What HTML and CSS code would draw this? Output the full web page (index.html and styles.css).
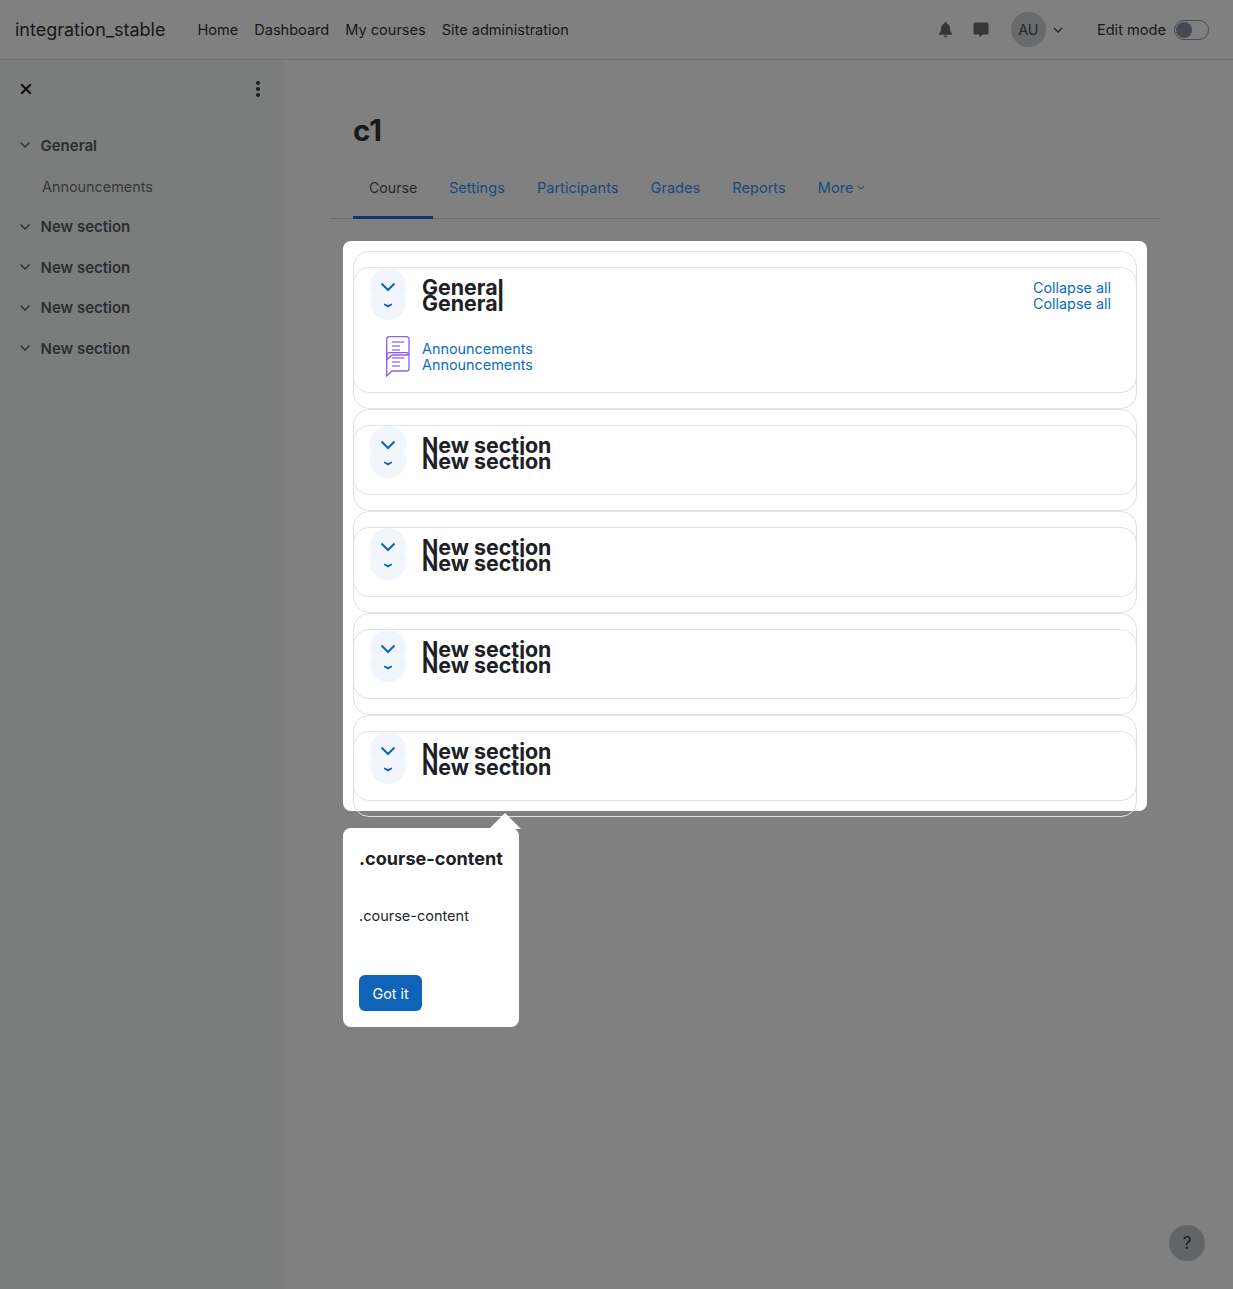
FILE: index.html
```html
<!DOCTYPE html>
<html lang="en">
<head>
  <meta charset="UTF-8">
  <title>c1</title>
  <link rel="stylesheet" href="styles.css">
</head>
<body>

<header class="navbar">
  <span class="brand">integration_stable</span>
  <nav class="primary-nav">
    <a>Home</a>
    <a>Dashboard</a>
    <a>My courses</a>
    <a>Site administration</a>
  </nav>
  <div class="nav-right">
    <svg class="nav-icon bell" viewBox="0 0 14 16"><path d="M7 0a1.200 1.200 0 0 0-1.200 1.200v.5C3.700 2.200 2.500 4 2.500 6.200c0 3.300-.9 4.300-1.900 5.400-.4.400-.1 1.100.5 1.100h11.800c.6 0 .9-.7.5-1.100-1-1.100-1.900-2.100-1.900-5.400 0-2.200-1.200-4-3.300-4.500v-.5A1.200 1.200 0 0 0 7 0zM5.200 13.600a1.800 1.800 0 0 0 3.600 0z"/></svg>
    <svg class="nav-icon chat" viewBox="0 0 16 16"><path d="M2 .5h12A1.500 1.500 0 0 1 15.500 2v9a1.500 1.500 0 0 1-1.500 1.500H9.500l-3 3v-3H2A1.500 1.500 0 0 1 .5 11V2A1.500 1.500 0 0 1 2 .5z"/></svg>
    <span class="avatar">AU</span>
    <svg class="chev avatar-chev" viewBox="0 0 10 6"><path d="M1 1l4 4 4-4"/></svg>
    <span class="edit-label">Edit mode</span>
    <span class="switch"><span class="knob"></span></span>
  </div>
</header>

<div class="page">
  <aside class="sidebar">
    <div class="sidebar-top">
      <svg class="close-icon" viewBox="0 0 10 10"><path d="M1 1l8 8M9 1l-8 8"/></svg>
      <span class="dots"><i></i><i></i><i></i></span>
    </div>
    <ul class="index">
      <li class="index-section"><svg class="chev" viewBox="0 0 10 6"><path d="M.5.500 5 5 9.500.5"/></svg>General</li>
      <li class="index-item">Announcements</li>
      <li class="index-section"><svg class="chev" viewBox="0 0 10 6"><path d="M.5.500 5 5 9.500.5"/></svg>New section</li>
      <li class="index-section"><svg class="chev" viewBox="0 0 10 6"><path d="M.5.500 5 5 9.500.5"/></svg>New section</li>
      <li class="index-section"><svg class="chev" viewBox="0 0 10 6"><path d="M.5.500 5 5 9.500.5"/></svg>New section</li>
      <li class="index-section"><svg class="chev" viewBox="0 0 10 6"><path d="M.5.500 5 5 9.500.5"/></svg>New section</li>
    </ul>
  </aside>

  <main class="main">
    <h1 class="course-title">c1</h1>
    <div class="tabs">
      <a class="tab active">Course</a>
      <a class="tab">Settings</a>
      <a class="tab">Participants</a>
      <a class="tab">Grades</a>
      <a class="tab">Reports</a>
      <a class="tab">More<svg class="chev more-chev" viewBox="0 0 10 6"><path d="M1 1l4 4 4-4"/></svg></a>
    </div>

    <div class="highlight">
      <div class="layer">
        <section class="card">
          <div class="card-head">
            <span class="toggle"><svg class="toggle-big" viewBox="0 0 16 10"><path d="M1.500 1.500 8 8l6.500-6.500"/></svg></span>
            <h3 class="card-title">General</h3>
            <a class="collapse-all">Collapse all</a>
          </div>
          <div class="activity">
            <svg class="forum-icon" viewBox="0 0 24 40"><path d="M3.500.7h17a2.500 2.500 0 0 1 2.500 2.500v13.300a2.500 2.500 0 0 1-2.500 2.500H6L.7 24V3.200A2.500 2.500 0 0 1 3.500.7z"/><path class="lines" d="M6 6h12M6 10h8M6 14h8"/></svg>
            <a class="activity-name">Announcements</a>
          </div>
        </section>
        <section class="card">
          <div class="card-head">
            <span class="toggle"><svg class="toggle-big" viewBox="0 0 16 10"><path d="M1.500 1.500 8 8l6.500-6.500"/></svg></span>
            <h3 class="card-title">New section</h3>
          </div>
        </section>
        <section class="card">
          <div class="card-head">
            <span class="toggle"><svg class="toggle-big" viewBox="0 0 16 10"><path d="M1.500 1.500 8 8l6.500-6.500"/></svg></span>
            <h3 class="card-title">New section</h3>
          </div>
        </section>
        <section class="card">
          <div class="card-head">
            <span class="toggle"><svg class="toggle-big" viewBox="0 0 16 10"><path d="M1.500 1.500 8 8l6.500-6.500"/></svg></span>
            <h3 class="card-title">New section</h3>
          </div>
        </section>
        <section class="card">
          <div class="card-head">
            <span class="toggle"><svg class="toggle-big" viewBox="0 0 16 10"><path d="M1.500 1.500 8 8l6.500-6.500"/></svg></span>
            <h3 class="card-title">New section</h3>
          </div>
        </section>
      </div>

      <!-- second copy the tour draws on top, 16px lower -->
      <div class="layer layer-clone">
        <section class="card">
          <div class="card-head">
            <span class="toggle"><svg class="toggle-small" viewBox="0 0 8 5"><path d="M0 .5l4 1.500 4-1.500V2L4 4.500 0 2z"/></svg></span>
            <h3 class="card-title">General</h3>
            <a class="collapse-all">Collapse all</a>
          </div>
          <div class="activity">
            <svg class="forum-icon" viewBox="0 0 24 40"><path d="M3.500.7h17a2.500 2.500 0 0 1 2.500 2.500v13.300a2.500 2.500 0 0 1-2.500 2.500H6L.7 24V3.200A2.500 2.500 0 0 1 3.500.7z"/><path class="lines" d="M6 6h12M6 10h8M6 14h8"/></svg>
            <a class="activity-name">Announcements</a>
          </div>
        </section>
        <section class="card">
          <div class="card-head">
            <span class="toggle"><svg class="toggle-small" viewBox="0 0 8 5"><path d="M0 .5l4 1.500 4-1.500V2L4 4.500 0 2z"/></svg></span>
            <h3 class="card-title">New section</h3>
          </div>
        </section>
        <section class="card">
          <div class="card-head">
            <span class="toggle"><svg class="toggle-small" viewBox="0 0 8 5"><path d="M0 .5l4 1.500 4-1.500V2L4 4.500 0 2z"/></svg></span>
            <h3 class="card-title">New section</h3>
          </div>
        </section>
        <section class="card">
          <div class="card-head">
            <span class="toggle"><svg class="toggle-small" viewBox="0 0 8 5"><path d="M0 .5l4 1.500 4-1.500V2L4 4.500 0 2z"/></svg></span>
            <h3 class="card-title">New section</h3>
          </div>
        </section>
        <section class="card">
          <div class="card-head">
            <span class="toggle"><svg class="toggle-small" viewBox="0 0 8 5"><path d="M0 .5l4 1.500 4-1.500V2L4 4.500 0 2z"/></svg></span>
            <h3 class="card-title">New section</h3>
          </div>
        </section>
      </div>

      <div class="tour-step">
        <span class="tour-arrow"></span>
        <h5 class="tour-title">.course-content</h5>
        <p class="tour-body">.course-content</p>
        <button class="tour-btn">Got it</button>
      </div>
    </div>
  </main>
</div>

<span class="help">?</span>

</body>
</html>
```

FILE: styles.css
```css
* {
  box-sizing: border-box;
}
html, body {
  height: 100%;
}
body {
  margin: 0;
  height: 1289px;
  overflow: hidden;
  background-color: #808080;
  color: #161819;
  font-family: Inter, "Liberation Sans", sans-serif;
  font-size: 14.4px;
}
a {
  text-decoration: none;
}

.chev {
  fill: none;
  stroke: currentColor;
  stroke-width: 1.3;
  width: 10px;
  height: 6px;
}

/* navbar */
.navbar {
  display: flex;
  align-items: center;
  height: 60px;
  padding: 0 24px 0 15px;
  border-bottom: 1px solid #6f7071;
}
.brand {
  font-size: 18px;
  margin-right: 32px;
}
.primary-nav {
  display: flex;
  gap: 16px;
  font-size: 14.550px;
}
.nav-right {
  display: flex;
  align-items: center;
  margin-left: auto;
}
.nav-icon {
  fill: #343638;
  width: 15px;
  height: 16px;
}
.chat {
  margin-left: 20px;
  width: 16px;
}
.avatar {
  display: flex;
  align-items: center;
  justify-content: center;
  width: 35px;
  height: 35px;
  margin-left: 22px;
  border-radius: 50%;
  background: #696a6c;
  color: #26282a;
}
.avatar-chev {
  margin-left: 7px;
  color: #222;
}
.edit-label {
  margin-left: 34px;
  font-size: 14.600px;
}
.switch {
  display: flex;
  align-items: center;
  width: 35px;
  height: 20px;
  margin-left: 8px;
  padding-left: 1px;
  border: 1px solid #4a4d50;
  border-radius: 10px;
}
.knob {
  width: 16px;
  height: 16px;
  border-radius: 50%;
  background: #454a52;
}

/* layout */
.page {
  display: flex;
  height: 1229px;
}
.sidebar {
  width: 284px;
  flex-shrink: 0;
  padding: 0 20px;
  background: #7b7d7c;
  color: #2b2d30;
}
.sidebar-top {
  display: flex;
  align-items: center;
  justify-content: space-between;
  height: 58px;
  padding-right: 4px;
}
.close-icon {
  fill: none;
  stroke: #111;
  stroke-width: 1.7;
  width: 12px;
  height: 12px;
}
.dots {
  display: flex;
  flex-direction: column;
  gap: 2px;
}
.dots i {
  width: 4px;
  height: 4px;
  border-radius: 50%;
  background: #1b1c1d;
}
.index {
  list-style: none;
  margin: 7px 0 0;
  padding: 0;
}
.index-section {
  display: flex;
  align-items: center;
  gap: 10.500px;
  height: 40.500px;
  font-size: 15px;
  font-weight: 600;
}
.index-item {
  display: flex;
  align-items: center;
  height: 41px;
  padding-left: 22px;
  color: #36383b;
}

/* main column */
.main {
  flex: 1;
  padding: 0 73px 0 46px;
}
.course-title {
  margin: 52px 0 0 23px;
  font-size: 29.500px;
  font-weight: 700;
  line-height: 36px;
}
.tabs {
  display: flex;
  height: 62px;
  margin-top: 9px;
  padding-left: 23px;
  border-bottom: 1px solid #6c6d6e;
  color: #174a7c;
  font-size: 14.600px;
}
.tab {
  display: flex;
  align-items: center;
  height: 62px;
  padding: 2px 16px 0;
  border-bottom: 3px solid transparent;
}
.tab.active {
  width: 80px;
  color: #26282a;
  font-size: 14.200px;
  border-bottom-color: #0a3a6b;
}
.more-chev {
  width: 8px;
  height: 5px;
  margin-left: 4px;
}

/* highlighted course content */
.highlight {
  position: relative;
  width: 804px;
  height: 570px;
  margin: 22px 0 0 13px;
  padding: 10px;
  border-radius: 8px;
  background: #fff;
  color: #1d2125;
}
.layer {
  display: flex;
  flex-direction: column;
  gap: 16px;
}
.layer-clone {
  position: absolute;
  top: 26px;
  left: 10px;
  right: 10px;
}
.card {
  padding: 16px 16px 32px;
  border: 1px solid #dee2e6;
  border-radius: 16px;
}
.card-head {
  display: flex;
  align-items: center;
  height: 36px;
}
.toggle {
  display: flex;
  align-items: center;
  justify-content: center;
  width: 36px;
  height: 36px;
  border-radius: 50%;
  background: #f1f6fc;
}
/* stays visible above the clone's circle */
.toggle-big {
  position: relative;
  z-index: 1;
  fill: none;
  stroke: #0f62b4;
  stroke-width: 2;
  width: 16px;
  height: 10px;
  margin-top: 2px;
}
.toggle-small {
  fill: #0f62b4;
  width: 8px;
  height: 5px;
  margin: 7px 0 0 -1px;
}
.card-title {
  margin: 4px 0 0 16px;
  font-size: 21.400px;
  font-weight: 700;
  line-height: 1.2;
}
.collapse-all {
  margin: 2px 9px 0 auto;
  color: #0f6cbf;
}
.activity {
  display: flex;
  align-items: center;
  height: 24px;
  margin-top: 32px;
  padding-left: 16px;
}
.forum-icon {
  fill: none;
  stroke: #8b5cf6;
  stroke-width: 1.300;
  width: 24px;
  height: 40px;
  margin-bottom: -16px;
  overflow: visible;
}
.forum-icon .lines {
  stroke-width: 1.500;
  stroke: #a27af7;
}
.activity-name {
  margin-left: 12px;
  color: #0f6cbf;
}

/* tour popover */
.tour-step {
  position: absolute;
  top: 587px;
  left: 0;
  width: 176px;
  height: 199px;
  padding: 16px;
  border-radius: 8px;
  background: #fff;
}
.tour-arrow {
  position: absolute;
  top: -15px;
  left: 146px;
  width: 32px;
  height: 16px;
  background: #fff;
  clip-path: polygon(50% 0, 100% 100%, 0 100%);
}
.tour-title {
  margin: 3px 0 0;
  font-size: 18.100px;
  font-weight: 700;
  line-height: 22px;
  white-space: nowrap;
}
.tour-body {
  margin: 36px 0 0;
  font-size: 14.500px;
  line-height: 22px;
  color: #26282a;
}
.tour-btn {
  display: block;
  height: 36px;
  margin-top: 48px;
  padding: 0 13.500px;
  border: 0;
  border-radius: 6px;
  background: #0f63b8;
  color: #fff;
  font: inherit;
}

.help {
  position: absolute;
  left: 1169px;
  top: 1225px;
  display: flex;
  align-items: center;
  justify-content: center;
  width: 36px;
  height: 36px;
  border-radius: 50%;
  background: #616568;
  font-size: 17px;
  color: #16181a;
}
```
